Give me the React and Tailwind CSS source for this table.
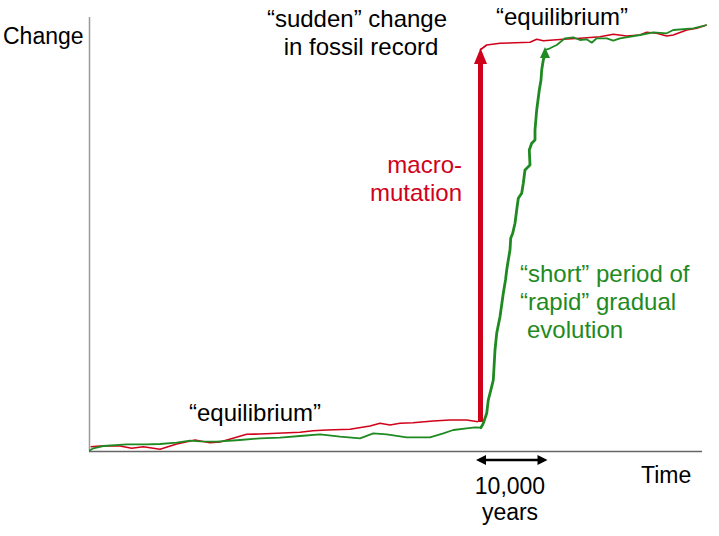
import React from "react";

const RED = "#d0021b";
const GREEN = "#1f8a22";

const toD = (pts) => pts.map((p, i) => (i === 0 ? "M" : "L") + p[0] + " " + p[1]).join(" ");

const redLow = [
  [90.7, 446.7], [100, 446], [120, 446], [131.7, 448.3], [143.3, 446.7], [160, 449.3], [176.7, 444],
  [195, 440], [210, 442.7], [220, 442], [246.7, 434.3], [260, 434], [300, 432.3], [313, 430.7],
  [326.7, 430], [350, 429.3], [370, 426], [380, 423.3], [390, 425], [400, 423.3], [413, 422.7],
  [433, 421], [450, 420], [466.7, 420], [478, 421.7],
];
const redTop = [
  [480, 50], [486.7, 45], [500, 43.3], [530, 42.3], [536.7, 39.3], [543.3, 40.7], [563.3, 39.3],
  [580, 38.3], [600, 36.7], [613.3, 34.3], [626.7, 36], [640, 35], [646.7, 32.3], [656.7, 33.3],
  [666.7, 36], [673.3, 35], [686.7, 30], [696.7, 28.3], [706.7, 25],
];
const greenLow = [
  [89.3, 450.7], [93.3, 448.3], [103.3, 446], [126.7, 444.3], [146.7, 444.3], [160, 444],
  [176.7, 442.7], [190, 440.7], [200, 441.3], [216.7, 441.7], [240, 440], [260, 438.3],
  [280, 437.7], [300, 436], [320, 434.3], [340, 436.7], [360, 438.3], [373.3, 433.3],
  [386.7, 434.3], [406.7, 437.3], [430, 437.3], [443.3, 433.3], [453.3, 430], [466.7, 428.3],
  [475, 427.3], [481, 427.7],
];
const greenClimb = [
  [481, 427.7], [483.3, 423.3], [486.7, 413.3], [488.3, 400], [491.7, 386.7], [493.3, 380],
  [495, 350], [496.7, 333.3], [500, 316.7], [503.3, 293.3], [505.5, 280], [506.7, 270],
  [508.3, 260], [510, 250], [510.7, 238.3], [512.7, 233.3], [515, 223.3], [516.7, 210],
  [518.3, 198.3], [521.7, 193.3], [523.3, 183.3], [525, 170], [530, 165], [529.3, 150],
  [531.7, 143.3], [535, 140], [535, 130], [536.7, 110],
  [539.3, 90], [541, 80], [541.7, 70], [543.3, 60], [544.5, 56],
];
const greenTop = [
  [545, 50], [550, 48.3], [556.7, 45], [565, 38.3], [573.3, 37.3], [580, 40], [586.7, 39.3],
  [591.7, 42.7], [596.7, 38.3], [606.7, 38.3], [613.3, 40.7], [620, 38.3], [640, 35],
  [653.3, 32.3], [666.7, 33.3], [673.3, 30], [693.3, 28.3], [706.7, 25],
];

export default function App() {
  const font = { fontFamily: '"Liberation Sans", Arial, sans-serif' };
  return (
    <div className="relative w-[719px] h-[536px] bg-white overflow-hidden">
      <svg width="719" height="536" viewBox="0 0 719 536" className="block" style={font}>
        {/* axes */}
        <line x1="89.5" y1="17" x2="89.5" y2="451" stroke="#9a9a9a" strokeWidth="1.5" />
        <line x1="89" y1="451.5" x2="702" y2="451.5" stroke="#666" strokeWidth="1.5" />

        {/* red lines */}
        <path d={toD(redLow)} fill="none" stroke={RED} strokeWidth="1.6" strokeLinejoin="round" />
        <path d={toD(redTop)} fill="none" stroke={RED} strokeWidth="1.6" strokeLinejoin="round" />
        {/* red arrow */}
        <rect x="478" y="62" width="5" height="360" fill={RED} />
        <polygon points="480.5,48 487,64 474,64" fill={RED} />

        {/* green lines */}
        <path d={toD(greenLow)} fill="none" stroke={GREEN} strokeWidth="1.8" strokeLinejoin="round" />
        <path d={toD(greenClimb)} fill="none" stroke={GREEN} strokeWidth="2.8" strokeLinejoin="round" strokeLinecap="round" />
        <polygon points="545,47 550,58 540,58" fill={GREEN} />
        <path d={toD(greenTop)} fill="none" stroke={GREEN} strokeWidth="1.8" strokeLinejoin="round" />

        {/* time span arrow */}
        <line x1="484" y1="460" x2="539" y2="460" stroke="#000" strokeWidth="2.6" />
        <polygon points="476,460 486,455 486,465" fill="#000" />
        <polygon points="547.5,460 537.5,455 537.5,465" fill="#000" />

        {/* labels */}
        <g fontSize="23" fill="#000">
          <text x="3" y="44">Change</text>
          <text x="641" y="483">Time</text>
          <text x="510" y="494" textAnchor="middle">10,000</text>
          <text x="510" y="520" textAnchor="middle">years</text>
        </g>
        <g fontSize="24" fill="#000">
          <text x="357" y="27" textAnchor="middle">“sudden” change</text>
          <text x="361" y="55" textAnchor="middle">in fossil record</text>
          <text x="496" y="25">“equilibrium”</text>
          <text x="189" y="421">“equilibrium”</text>
        </g>
        <g fontSize="24" fill={RED} textAnchor="end">
          <text x="462" y="173">macro-</text>
          <text x="462" y="201">mutation</text>
        </g>
        <g fontSize="24" fill={GREEN}>
          <text x="520" y="282">“short” period of</text>
          <text x="520" y="310">“rapid” gradual</text>
          <text x="527" y="338">evolution</text>
        </g>
      </svg>
    </div>
  );
}
